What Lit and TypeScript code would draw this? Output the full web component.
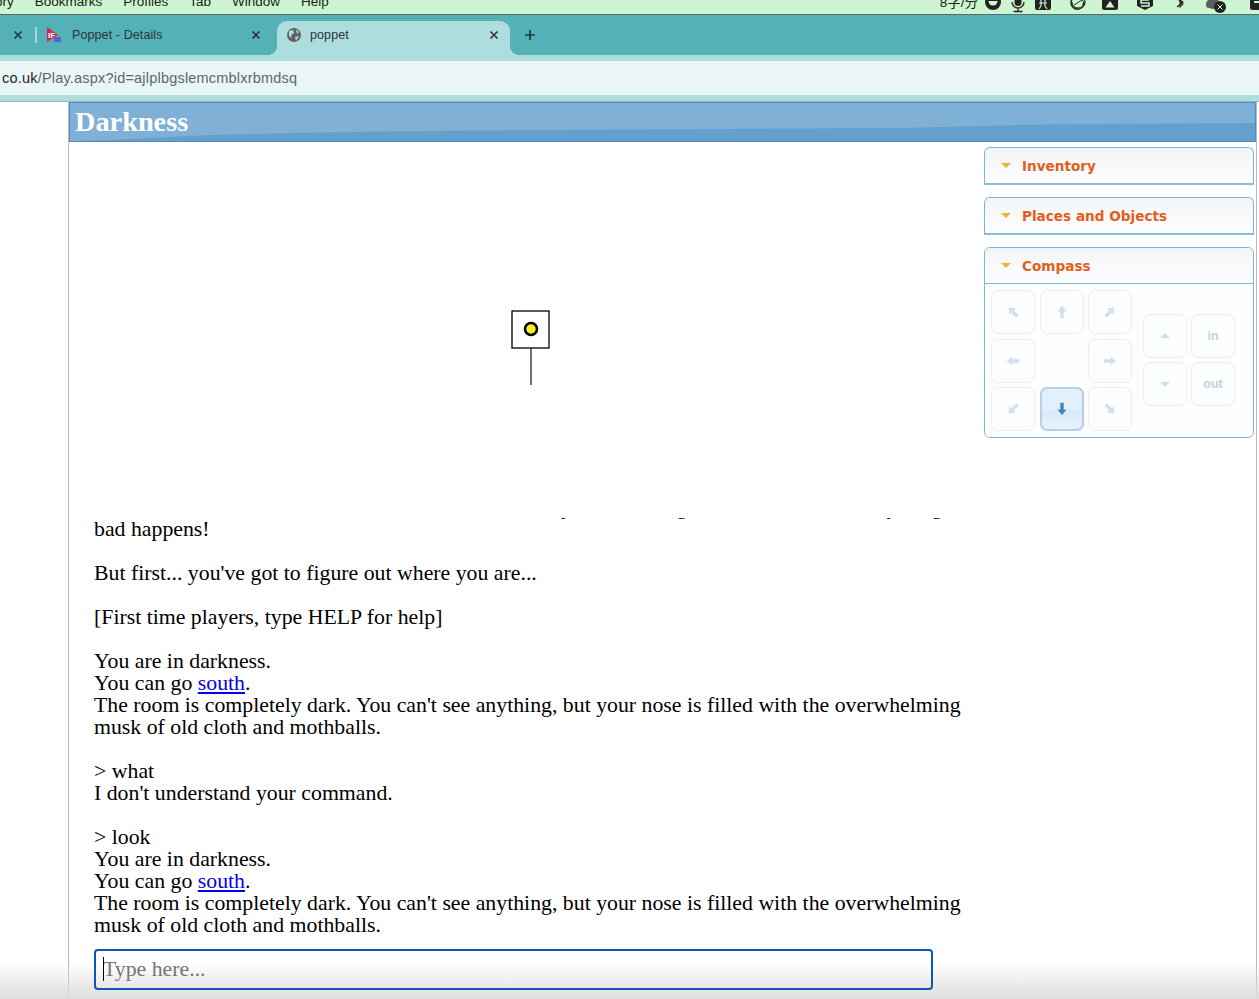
import {LitElement, html, svg, css} from 'lit';
import {customElement} from 'lit/decorators.js';

const menus = ['ory', 'Bookmarks', 'Profiles', 'Tab', 'Window', 'Help'];

const gridButtons = [
    {angle: -45}, {angle: 0}, {angle: 45},
    {angle: -90}, null, {angle: 90},
    {angle: -135}, {angle: 180, active: true}, {angle: 135},
];

function arrow(angle: number, active = false) {
    return html`<svg class="arrow ${active ? 'on' : ''}" width="16" height="16" viewBox="0 0 14 14">
	<g transform="rotate(${angle} 7 7)"><path d="M7 1.5 L11 6.5 H8.5 V12.5 H5.5 V6.5 H3 Z"/></g>
    </svg>`;
}

function closeIcon() {
    return html`<svg class="x" width="10" height="10" viewBox="0 0 10 10"><path d="M1.5 1.5 L8.5 8.5 M8.5 1.5 L1.5 8.5"/></svg>`;
}

function trayIcons() {
    return svg`
	<circle cx="993" cy="2" r="8" fill="#222"/>
	<path d="M988.500 1 A4.500 4.500 0 0 0 997.500 1 Z" fill="#d0f5d2"/>
	<rect x="1014.500" y="-6" width="7" height="12" rx="3.500" fill="#222"/>
	<path d="M1012 2 A6 6 0 0 0 1024 2 M1018 8 V11 M1013.500 11.500 H1022.500" stroke="#222" stroke-width="1.300" fill="none"/>
	<rect x="1035" y="-6" width="16" height="16" rx="2" fill="#222"/>
	<path d="M1039 3 H1047 M1041 0 V6 M1045 0 V6 M1041 6 L1039 9 M1045 6 L1047 9" stroke="#d0f5d2" stroke-width="1.200" fill="none"/>
	<circle cx="1078" cy="2" r="7" stroke="#222" stroke-width="1.200" fill="none"/>
	<path d="M1073 -1 A6 6 0 0 0 1081 8 M1083 5 A6 6 0 0 0 1076 -3 M1074 5 L1082 0 M1072 2 A6 6 0 0 0 1084 2" stroke="#222" stroke-width="1" fill="none"/>
	<rect x="1102" y="-6" width="16" height="16" rx="2.500" fill="#222"/>
	<path d="M1110 1 L1114.500 7.500 H1105.500 Z" fill="#d0f5d2"/>
	<path d="M1137 -6 H1153 V6 L1145 10 L1137 6 Z" fill="#222"/>
	<path d="M1149 0 H1141 V3 H1149 V6 H1141" stroke="#d0f5d2" stroke-width="1.500" fill="none"/>
	<path d="M1177 -2 L1183 4 L1180 7 V0 L1183 2 L1177 7" stroke="#222" stroke-width="1.100" fill="none"/>
	<circle cx="1213" cy="3" r="6" fill="#5c5c5c"/>
	<rect x="1206" y="1" width="12" height="7" rx="3" fill="#5c5c5c"/>
	<circle cx="1220" cy="7" r="6" fill="#222"/>
	<path d="M1217.500 4.500 L1222.500 9.500 M1222.500 4.500 L1217.500 9.500" stroke="#d0f5d2" stroke-width="1"/>
	<rect x="1250" y="-6" width="16" height="16" rx="2.500" fill="#222"/>
	<rect x="1254" y="1" width="12" height="2" fill="#d0f5d2"/>
    `;
}

@customElement('app-root')
class AppRoot extends LitElement {
    static styles = css`
:host {
display: block;
width: 1259px;
height: 999px;
overflow: hidden;
background: #fff;
font-family: "Liberation Serif", "Times New Roman", serif;
color: #000;
}
.menubar {
height: 14px;
background: #cdf5d0;
border-bottom: 1px solid #5a6a66;
display: flex;
overflow: hidden;
font-family: "Liberation Sans", Arial, sans-serif;
font-size: 13.5px;
line-height: 14px;
color: #1c1c1c;
}
.menus {
display: flex;
gap: 21px;
margin: -5px 0 0 -5px;
}
.rate {
margin: -4px 4px 0 auto;
font-family: "Liberation Sans", "Noto Sans CJK SC", sans-serif;
font-size: 13.5px;
}
.tray {
flex: none;
}
.tabs {
height: 40px;
background: #55b1b8;
display: flex;
align-items: flex-end;
font-family: "Liberation Sans", Arial, sans-serif;
font-size: 12.5px;
color: #2b3436;
}
.stub {
width: 35px;
height: 34px;
display: flex;
align-items: center;
padding: 0 0 7px 13px;
box-sizing: border-box;
}
.sep {
width: 2px;
height: 16px;
margin-bottom: 12px;
background: #a5d8da;
}
.tab {
height: 34px;
display: flex;
align-items: center;
position: relative;
box-sizing: border-box;
padding-bottom: 7px;
}
.tab.idle {
width: 240px;
padding-left: 8px;
}
.tab.idle .fav {
margin-right: 11px;
}
.tab.idle .x {
margin-right: 16px;
}
.tab.active {
width: 233px;
padding-left: 10px;
background: #aeddde;
border-radius: 10px 10px 0 0;
}
.tab.active .fav {
margin-right: 9px;
}
.tab.active .x {
margin-right: 11px;
}
.tab.active::before, .tab.active::after {
content: "";
position: absolute;
bottom: 0;
width: 10px;
height: 10px;
}
.tab.active::before {
left: -10px;
background: radial-gradient(circle at 0 0, transparent 10px, #aeddde 10.5px);
}
.tab.active::after {
right: -10px;
background: radial-gradient(circle at 100% 0, transparent 10px, #aeddde 10.5px);
}
.fav {
flex: none;
}
.tab .label {
flex: 1;
letter-spacing: 0.1px;
}
.x path {
stroke: #2c3437;
stroke-width: 1.6;
fill: none;
}
.plus {
margin: 0 0 14px 14px;
}
.toolbar {
background: #aeddde;
padding: 6px 0;
}
.omni {
height: 34px;
background: #e9f6f5;
display: flex;
align-items: center;
padding-left: 2px;
font-family: "Liberation Sans", Arial, sans-serif;
font-size: 14.5px;
letter-spacing: 0.2px;
color: #5c6768;
}
.omni b {
font-weight: normal;
color: #1f2628;
}
.page {
height: 898px;
border-top: 1px solid #9fb7b8;
display: flex;
position: relative;
box-sizing: border-box;
}
.gutter {
width: 68px;
border-right: 1px solid #b8b8b8;
flex: none;
}
.main {
width: 1187px;
border-right: 1px solid #b8b8b8;
flex: none;
}
.title {
height: 40px;
box-sizing: border-box;
border: 1px solid #4b8fca;
background: #659fcc;
position: relative;
color: #fff;
font-weight: bold;
font-size: 28.3px;
line-height: 37px;
padding-left: 5px;
overflow: hidden;
font-family: "Liberation Serif", serif;
}
.title svg {
position: absolute;
inset: 0;
width: 100%;
height: 100%;
}
.title span {
position: relative;
}
.body {
display: flex;
}
.game {
width: 915px;
flex: none;
}
.map {
height: 376px;
display: flex;
justify-content: center;
padding-left: 9px;
box-sizing: border-box;
}
.map svg {
margin-top: 168px;
}
.output {
height: 418px;
overflow: hidden;
display: flex;
flex-direction: column;
justify-content: flex-end;
padding-left: 25px;
font-size: 21.8px;
line-height: 22px;
white-space: nowrap;
}
.output a {
color: #0000ee;
text-decoration: underline;
}
.inputwrap {
margin: 13px 0 0 25px;
width: 839px;
height: 41px;
position: relative;
z-index: 1;
}
.inputwrap input {
width: 100%;
height: 100%;
box-sizing: border-box;
border: 2px solid #0b57b8;
border-radius: 4px;
padding: 0 0 0 7px;
outline: none;
background: transparent;
font-family: "Liberation Serif", serif;
font-size: 21.8px;
color: #000;
}
.inputwrap input::placeholder {
color: #757575;
opacity: 1;
}
.caret {
position: absolute;
left: 9px;
top: 8px;
width: 1px;
height: 24px;
background: #000;
}
.side {
width: 270px;
flex: none;
padding-top: 5px;
display: flex;
flex-direction: column;
gap: 12px;
}
.panel {
border: 1px solid #7fb4de;
border-bottom: 2px solid #8abbe0;
border-radius: 6px 6px 0 0;
}
.panel.open {
border-bottom: 1px solid #7fb4de;
border-radius: 6px;
}
.head {
height: 35px;
box-sizing: border-box;
display: flex;
align-items: center;
padding-left: 16px;
gap: 11px;
background: linear-gradient(#f2f5f8, #fdfefe);
border-radius: 6px 6px 0 0;
font-family: "DejaVu Sans", Verdana, sans-serif;
font-weight: bold;
font-size: 13.6px;
color: #e0601c;
}
.panel.open .head {
height: 36px;
border-bottom: 1px solid #7fb4de;
}
.tri {
width: 0;
height: 0;
border-left: 5px solid transparent;
border-right: 5px solid transparent;
border-top: 5px solid #f6ad2e;
}
.compass {
height: 153px;
box-sizing: border-box;
padding: 6px 0 0 6px;
display: flex;
background: #fdfeff;
border-radius: 0 0 6px 6px;
}
.grid3 {
display: grid;
grid-template-columns: repeat(3, 44px);
grid-auto-rows: 44px;
gap: 4.5px;
align-self: flex-start;
}
.grid2 {
display: grid;
grid-template-columns: 44px 44px;
grid-auto-rows: 44px;
gap: 4px;
margin: 24px 0 0 11px;
align-self: flex-start;
}
.btn {
box-sizing: border-box;
border: 1.5px solid #e7f0f7;
border-radius: 7px;
background: #fdfeff;
display: flex;
align-items: center;
justify-content: center;
font-family: "Liberation Sans", Arial, sans-serif;
font-weight: bold;
font-size: 12.5px;
color: #c2d2e1;
}
.btn.on {
border: 2px solid #b5cfe6;
background: linear-gradient(#e3f0fb 0 50%, #d9eafa 55%, #e8f3fc);
}
.arrow path {
fill: #cfe0ee;
}
.arrow.on path {
fill: #3f87bf;
}
.fade {
position: absolute;
left: 0;
right: 0;
bottom: 0;
height: 36px;
background: linear-gradient(rgba(221,221,221,0), rgba(221,221,221,1));
pointer-events: none;
}
`;

    lines() {
	const south = html`You can go <a href="#">south</a>.`;
	const room = html`The room is completely dark. You can't see anything, but your nose is filled with the overwhelming<br>musk of old cloth and mothballs.`;
	return html`<div class="output"><div>
Its lost ones all hide in the dark so work it all out so by the old red gate and to do before anything<br>
bad happens!<br><br>
But first... you've got to figure out where you are...<br><br>
[First time players, type HELP for help]<br><br>
You are in darkness.<br>${south}<br>${room}<br><br>
&gt; what<br>I don't understand your command.<br><br>
&gt; look<br>You are in darkness.<br>${south}<br>${room}
</div></div>`;
    }

    renderCompass() {
	return html`<div class="compass">
	    <div class="grid3">
		${gridButtons.map(b => b
		    ? html`<div class="btn ${b.active ? 'on' : ''}">${arrow(b.angle, b.active)}</div>`
		    : html`<div></div>`)}
	    </div>
	    <div class="grid2">
		<div class="btn"><svg class="arrow" width="14" height="14" viewBox="0 0 14 14"><path d="M7 4 L12 9 H2 Z"/></svg></div>
		<div class="btn">in</div>
		<div class="btn"><svg class="arrow" width="14" height="14" viewBox="0 0 14 14"><path d="M7 10 L12 5 H2 Z"/></svg></div>
		<div class="btn">out</div>
	    </div>
	</div>`;
    }

    render() {
	return html`
<div class="menubar">
    <div class="menus">${menus.map(m => html`<span>${m}</span>`)}</div>
    <span class="rate">8字/分</span>
    <svg class="tray" width="277" height="14" viewBox="982 0 277 14">${trayIcons()}</svg>
</div>
<div class="tabs">
    <div class="stub">${closeIcon()}</div>
    <div class="sep"></div>
    <div class="tab idle">
	<svg class="fav" width="16" height="16" viewBox="0 0 16 16">
	    <path d="M2 0 L13 8 L2 15 Z" fill="#d1274b"/>
	    <text x="3" y="11" font-size="8" font-weight="bold" fill="#fff" font-family="Liberation Sans">IF</text>
	    <rect x="9" y="10" width="7" height="5" rx="1" fill="#5a5fd0"/>
	</svg>
	<span class="label">Poppet - Details</span>
	${closeIcon()}
    </div>
    <div class="tab active">
	<svg class="fav" width="14" height="14" viewBox="0 0 14 14">
	    <circle cx="7" cy="7" r="7" fill="#5f6368"/>
	    <path d="M2 3 L6 2 L7 5 L4 7 L5 10 L2 8 Z M9 1 L12 4 L10 6 Z M8 9 L12 8 L9 13 Z" fill="#aeddde"/>
	</svg>
	<span class="label">poppet</span>
	${closeIcon()}
    </div>
    <svg class="plus" width="12" height="12" viewBox="0 0 12 12"><path d="M6 1 V11 M1 6 H11" stroke="#2c3437" stroke-width="1.700"/></svg>
</div>
<div class="toolbar">
    <div class="omni"><b>co.uk</b>/Play.aspx?id=ajlplbgslemcmblxrbmdsq</div>
</div>
<div class="page">
    <div class="gutter"></div>
    <div class="main">
	<div class="title">
	    <svg viewBox="0 0 1185 38" preserveAspectRatio="none">
		<path d="M0 38 C60 37 90 34 120 33 C250 28 400 27 830 25 C900 24 950 21 1030 21 L1185 20 V0 H0 Z" fill="#80b0d6"/>
	    </svg>
	    <span>Darkness</span>
	</div>
	<div class="body">
	    <div class="game">
		<div class="map">
		    <svg width="40" height="76" viewBox="0 0 40 76">
			<rect x="1" y="1" width="37" height="37" fill="#fff" stroke="#000" stroke-width="1.300"/>
			<circle cx="20" cy="19" r="6" fill="#ffef20" stroke="#000" stroke-width="2.500"/>
			<path d="M20 38 V75" stroke="#222" stroke-width="1.300"/>
		    </svg>
		</div>
		${this.lines()}
		<div class="inputwrap">
		    <input placeholder="Type here...">
		    <span class="caret"></span>
		</div>
	    </div>
	    <div class="side">
		<div class="panel"><div class="head"><span class="tri"></span>Inventory</div></div>
		<div class="panel"><div class="head"><span class="tri"></span>Places and Objects</div></div>
		<div class="panel open"><div class="head"><span class="tri"></span>Compass</div>${this.renderCompass()}</div>
	    </div>
	</div>
    </div>
    <div class="fade"></div>
</div>
`;
    }
}
